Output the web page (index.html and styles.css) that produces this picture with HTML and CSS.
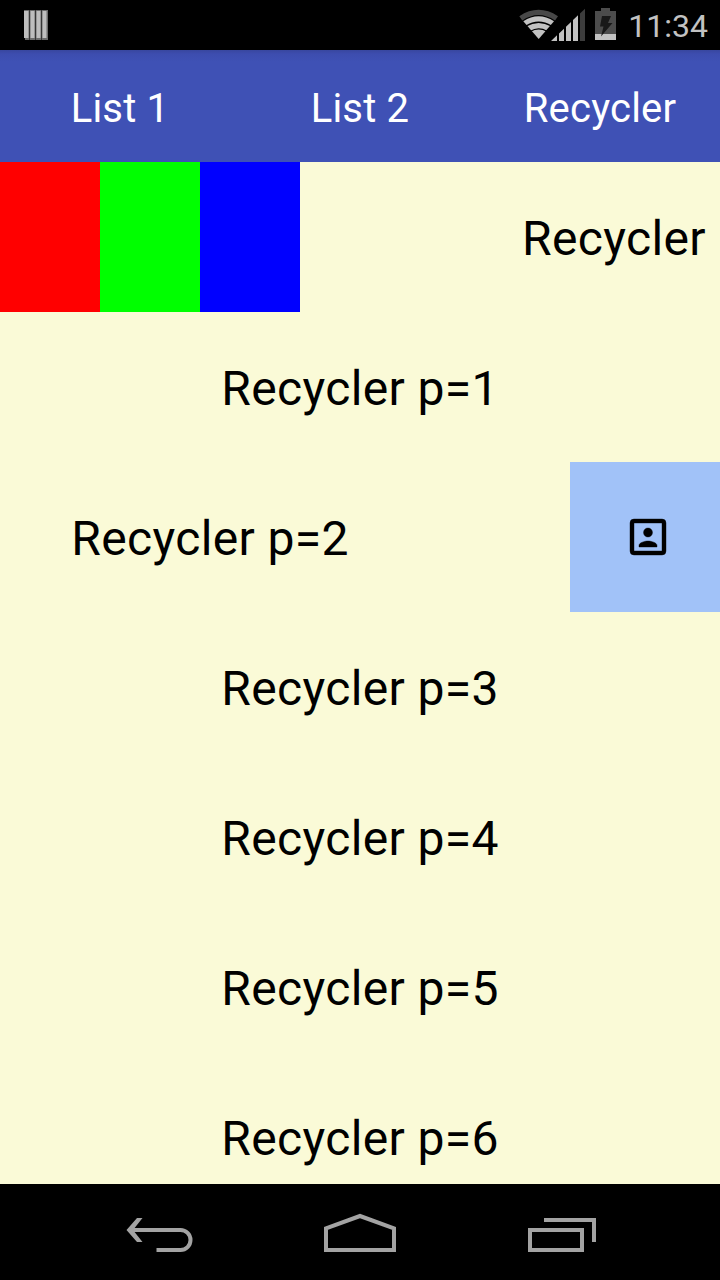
FILE: index.html
```html
<!DOCTYPE html>
<html lang="en">
<head>
<meta charset="utf-8">
<title>Recycler</title>
<link rel="stylesheet" href="styles.css">
</head>
<body>
<div class="screen">
  <header class="status">
    <svg class="notice" width="24" height="30" viewBox="0 0 24 30">
      <path fill="#6c6c6c" d="M0 0h24v30H1z"/>
      <path fill="#bebebe" d="M0 1h4.500v27H0zM6.500 1h4v27h-4zM12.500 1h4v27h-4zM18.500 1h4v27h-4z"/>
      <path fill="#000" d="M5 0h1v30H5zM11 0h1v30h-1zM17 0h1v30h-1z" opacity=".5"/>
    </svg>
    <div class="indicators">
      <svg width="98" height="50" viewBox="519 0 98 50">
        <path fill="#484848" d="M519.300 16.200Q538.500 3.500 558 16.200L555 20.500Q538.500 9.500 522.300 20.500z"/>
        <path fill="#c2c2c2" d="M523.300 21.200Q538.500 11.500 554 21.200L538.700 39z"/>
        <g fill="none" stroke="#000" stroke-width="1.300">
          <path d="M526 26Q538.500 18.500 551.500 26M530.500 31.300Q538.500 26.500 547 31.300"/>
        </g>
        <path fill="#c2c2c2" d="M551 41L557 35.300V41zM559 33.500L564 28.700V41h-5zM566 26.800L571 22V41h-5zM573 20L578 15.300V41h-5z"/>
        <path fill="#3c3c3c" d="M580 13.500L585 8.800V41h-5z"/>
        <path fill="#4c4c4c" d="M601 8h9v3h6v23h-21V11h6z"/>
        <path fill="#c2c2c2" d="M595 34h21v6h-21z"/>
        <path fill="#191919" d="M602 16h9l-3 7h4.500L601 36.500l2.500-10H600z"/>
      </svg>
      <span class="clock">11:34</span>
    </div>
  </header>
  <nav class="tabs">
    <div class="tab">List 1</div>
    <div class="tab">List 2</div>
    <div class="tab">Recycler</div>
  </nav>
  <main class="list">
    <div class="row">
      <div class="swatch red"></div>
      <div class="swatch green"></div>
      <div class="swatch blue"></div>
      <div class="label label-pushed">Recycler</div>
    </div>
    <div class="row"><div class="label">Recycler p=1</div></div>
    <div class="row row-end">
      <div class="label">Recycler p=2</div>
      <div class="action">
        <svg width="48" height="48" viewBox="0 0 24 24">
          <path d="M19 3H5a2 2 0 0 0-2 2v14a2 2 0 0 0 2 2h14a2 2 0 0 0 2-2V5a2 2 0 0 0-2-2zm0 16H5V5h14v14zm-7-7c1.240 0 2.250-1.010 2.250-2.250S13.240 7.500 12 7.500 9.750 8.510 9.750 9.750 10.760 12 12 12zm4.500 4.250c0-1.500-3-2.250-4.500-2.250s-4.500.750-4.500 2.250V17h9v-.750z" stroke="#000" stroke-width=".2"/>
        </svg>
      </div>
    </div>
    <div class="row"><div class="label">Recycler p=3</div></div>
    <div class="row"><div class="label">Recycler p=4</div></div>
    <div class="row"><div class="label">Recycler p=5</div></div>
    <div class="row"><div class="label">Recycler p=6</div></div>
  </main>
  <footer class="navbar">
    <svg width="720" height="96" viewBox="0 1184 720 96">
      <g fill="none" stroke="#a3a3a3" stroke-width="4">
        <path d="M130 1230h50.500a10 10 0 0 1 0 20H156.500"/>
        <path d="M326 1228.400L360 1216l34 12.400V1250h-68z"/>
        <path d="M530 1230h52v20h-52zM544 1220h50v22"/>
      </g>
      <path fill="#a3a3a3" d="M137 1218h5.500L133 1230l9.500 12H137L126.500 1230z"/>
    </svg>
  </footer>
</div>
</body>
</html>
```

FILE: styles.css
```css
* {
  box-sizing: border-box;
}

body {
  margin: 0;
  font-family: Roboto, sans-serif;
}

svg {
  display: block;
}

.screen {
  display: flex;
  flex-direction: column;
  width: 720px;
  height: 1280px;
  overflow: hidden;
}

.status {
  display: flex;
  flex: none;
  justify-content: space-between;
  height: 50px;
  padding: 0 12px 0 24px;
  background: #000;
}

.notice {
  margin-top: 10px;
}

.indicators {
  display: flex;
  gap: 11px;
}

.clock {
  color: #c2c2c2;
  font-size: 32px;
  line-height: 52px;
}

.tabs {
  display: grid;
  flex: none;
  grid-template-columns: repeat(3, 1fr);
  height: 112px;
  background: linear-gradient(#38479f, #3d4daf 4px, #3f51b5 12px);
}

.tab {
  color: #fff;
  font-size: 40px;
  letter-spacing: 0.2px;
  line-height: 118px;
  text-align: center;
}

.list {
  flex: 1;
  overflow: hidden;
  background: #fafad7;
}

.row {
  display: flex;
  height: 150px;
  overflow: hidden;
}

.row-end {
  justify-content: flex-end;
}

.label {
  flex: none;
  width: 720px;
  color: #000;
  font-size: 48px;
  letter-spacing: 0.36px;
  line-height: 154px;
  text-align: center;
}

.label-pushed {
  width: 420px;
  padding-right: 14px;
  text-align: right;
}

.swatch {
  flex: none;
  width: 100px;
}

.red {
  background: #f00;
}

.green {
  background: #0f0;
}

.blue {
  background: #00f;
}

.action {
  display: flex;
  flex: none;
  align-items: center;
  width: 150px;
  padding-left: 54px;
  background: #a1c2f8;
}

.navbar {
  flex: none;
  height: 96px;
  background: #000;
}
```
